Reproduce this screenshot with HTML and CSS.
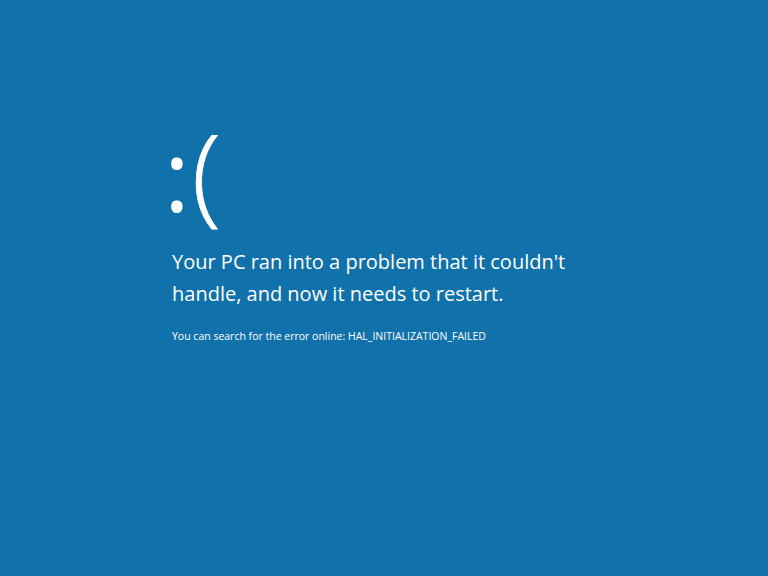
FILE: index.html
```html
<!DOCTYPE html>
<html>
<head>
<meta charset="utf-8">
<link rel="stylesheet" href="styles.css">
</head>
<body>
<main class="screen">
  <div class="content">
    <div class="face"><span class="colon">:</span><span class="paren">(</span></div>
    <p class="message">Your PC ran into a problem that it couldn't<br>handle, and now it needs to restart.</p>
    <p class="code">You can search for the error online: HAL_INITIALIZATION_FAILED</p>
  </div>
</main>
</body>
</html>
```
FILE: styles.css
```css
html, body {
  margin: 0;
  padding: 0;
  width: 768px;
  height: 576px;
  overflow: hidden;
  background: #1171aa;
}
.screen {
  width: 768px;
  height: 576px;
  box-sizing: border-box;
  padding: 111px 0 0 172px;
  color: #ffffff;
  font-family: "Open Sans", "Noto Sans", sans-serif;
}
.content {
  display: flex;
  flex-direction: column;
}
.face {
  font-size: 104px;
  font-weight: 400;
  line-height: 120px;
  height: 120px;
  margin-left: -8px;
}
.colon {
  font-size: 98px;
  margin-right: 2px;
}
.paren {
  font-size: 107px;
  font-weight: 300;
  -webkit-text-stroke: 0.8px #ffffff;
}
.message {
  margin: 15px 0 0 0;
  font-size: 20px;
  line-height: 32px;
  font-weight: 400;
}
.code {
  margin: 18px 0 0 0;
  font-size: 10.5px;
  line-height: 16px;
}
```
